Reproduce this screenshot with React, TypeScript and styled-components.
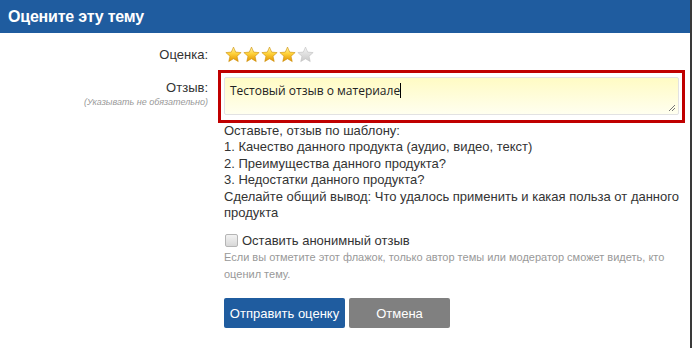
import React from 'react';
import styled, { createGlobalStyle } from 'styled-components';

const GlobalStyle = createGlobalStyle`
  html, body {
    margin: 0;
    padding: 0;
    background: #ffffff;
  }
  body {
    font-family: 'Liberation Sans', Arial, sans-serif;
    color: #333;
  }
`;

const Panel = styled.div`
  width: 692px;
  height: 348px;
  box-sizing: border-box;
  border-right: 2px solid #3a3a3a;
  background: #fff;
  overflow: hidden;
`;

const Header = styled.div`
  height: 33px;
  background: #1f5c9f;
  display: flex;
  align-items: center;
  padding-left: 8px;
`;

const Title = styled.h2`
  margin: 0;
  color: #fff;
  font-size: 16px;
  font-weight: 700;
  letter-spacing: -0.2px;
`;

const Form = styled.div`
  display: grid;
  grid-template-columns: 208px 1fr;
  column-gap: 16px;
  padding: 13px 11px 0 0;
`;

const Label = styled.div<{ $top?: number }>`
  text-align: right;
  font-size: 13px;
  color: #333;
  padding-top: ${p => p.$top ?? 0}px;
`;

const Note = styled.div`
  font-size: 9px;
  font-style: italic;
  color: #999;
  margin-top: 2px;
`;

const Stars = styled.div`
  display: flex;
  gap: 1px;
  height: 17px;
  align-items: center;
  margin-left: 1px;
`;

const Highlight = styled.div`
  margin: 7px -6px 0 -6px;
  border: 3px solid #c00000;
  padding: 4px 3px 5px 3px;
`;

const TextArea = styled.div`
  position: relative;
  height: 38px;
  box-sizing: border-box;
  border: 1px solid #e2e2e2;
  border-radius: 2px;
  background: linear-gradient(to bottom, #fffbc4 0%, #ffffef 100%);
  padding: 4px 5px;
  font-family: 'Open Sans', 'Noto Sans', sans-serif;
  font-size: 12px;
  color: #222;
`;

const Caret = styled.span`
  display: inline-block;
  width: 1px;
  height: 15px;
  background: #000;
  vertical-align: -3px;
`;

const Grip = styled.svg`
  position: absolute;
  right: 2px;
  bottom: 2px;
`;

const Hint = styled.div`
  font-size: 13px;
  line-height: 16.4px;
  color: #333;
  margin-top: 0;
`;

const CheckRow = styled.label`
  display: flex;
  align-items: center;
  gap: 4px;
  margin-top: 12px;
  font-size: 13px;
  color: #333;
`;

const Box = styled.span`
  width: 11px;
  height: 11px;
  border: 1px solid #b5b5b5;
  border-radius: 2px;
  background: linear-gradient(to bottom, #f2f2f2, #d8d8d8);
  margin-left: 1px;
`;

const Help = styled.div`
  font-size: 11px;
  line-height: 17px;
  color: #999;
  margin-top: 1px;
  padding-right: 10px;
`;

const Buttons = styled.div`
  display: flex;
  gap: 4px;
  margin-top: 15px;
`;

const Button = styled.button<{ $variant: 'primary' | 'muted' }>`
  height: 30px;
  border: none;
  border-radius: 2px;
  font-family: 'Liberation Sans', Arial, sans-serif;
  font-size: 13px;
  color: #fff;
  background: ${p => (p.$variant === 'primary' ? '#1f5c9f' : '#808080')};
  width: ${p => (p.$variant === 'primary' ? '121px' : '101px')};
  padding: 0;
  cursor: pointer;
`;

const Star: React.FC<{ on: boolean; id: string }> = ({ on, id }) => (
  <svg width="17" height="17" viewBox="0 0 24 24">
    <defs>
      <linearGradient id={id} x1="0" y1="0" x2="0" y2="1">
        {on ? (
          <>
            <stop offset="0" stopColor="#fff6b0" />
            <stop offset="0.45" stopColor="#ffd23a" />
            <stop offset="1" stopColor="#e09000" />
          </>
        ) : (
          <>
            <stop offset="0" stopColor="#f4f4f4" />
            <stop offset="1" stopColor="#c8c8c8" />
          </>
        )}
      </linearGradient>
    </defs>
    <path
      d="M12 1.5l3.1 7.1 7.7.7-5.8 5.1 1.7 7.6L12 18l-6.7 4 1.7-7.6-5.8-5.1 7.7-.7z"
      fill={`url(#${id})`}
      stroke={on ? '#c98a00' : '#bdbdbd'}
      strokeWidth="0.8"
      strokeLinejoin="round"
    />
  </svg>
);

export default function App() {
  return (
    <>
      <GlobalStyle />
      <Panel>
        <Header>
          <Title>Оцените эту тему</Title>
        </Header>
        <Form>
          <Label $top={1}>Оценка:</Label>
          <Stars>
            {[0, 1, 2, 3, 4].map(i => (
              <Star key={i} on={i < 4} id={`star${i}`} />
            ))}
          </Stars>

          <Label $top={17}>
            Отзыв:
            <Note>(Указывать не обязательно)</Note>
          </Label>
          <div>
            <Highlight>
              <TextArea>
                Тестовый отзыв о материале<Caret />
                <Grip width="9" height="9" viewBox="0 0 9 9">
                  <path d="M8 2L2 8M8 5L5 8" stroke="#777" strokeWidth="1" />
                </Grip>
              </TextArea>
            </Highlight>
            <Hint>
              Оставьте, отзыв по шаблону:
              <br />
              1. Качество данного продукта (аудио, видео, текст)
              <br />
              2. Преимущества данного продукта?
              <br />
              3. Недостатки данного продукта?
              <br />
              Сделайте общий вывод: Что удалось применить и какая польза от данного продукта
            </Hint>
            <CheckRow>
              <Box />
              Оставить анонимный отзыв
            </CheckRow>
            <Help>
              Если вы отметите этот флажок, только автор темы или модератор сможет видеть, кто
              оценил тему.
            </Help>
            <Buttons>
              <Button $variant="primary">Отправить оценку</Button>
              <Button $variant="muted">Отмена</Button>
            </Buttons>
          </div>
        </Form>
      </Panel>
    </>
  );
}
